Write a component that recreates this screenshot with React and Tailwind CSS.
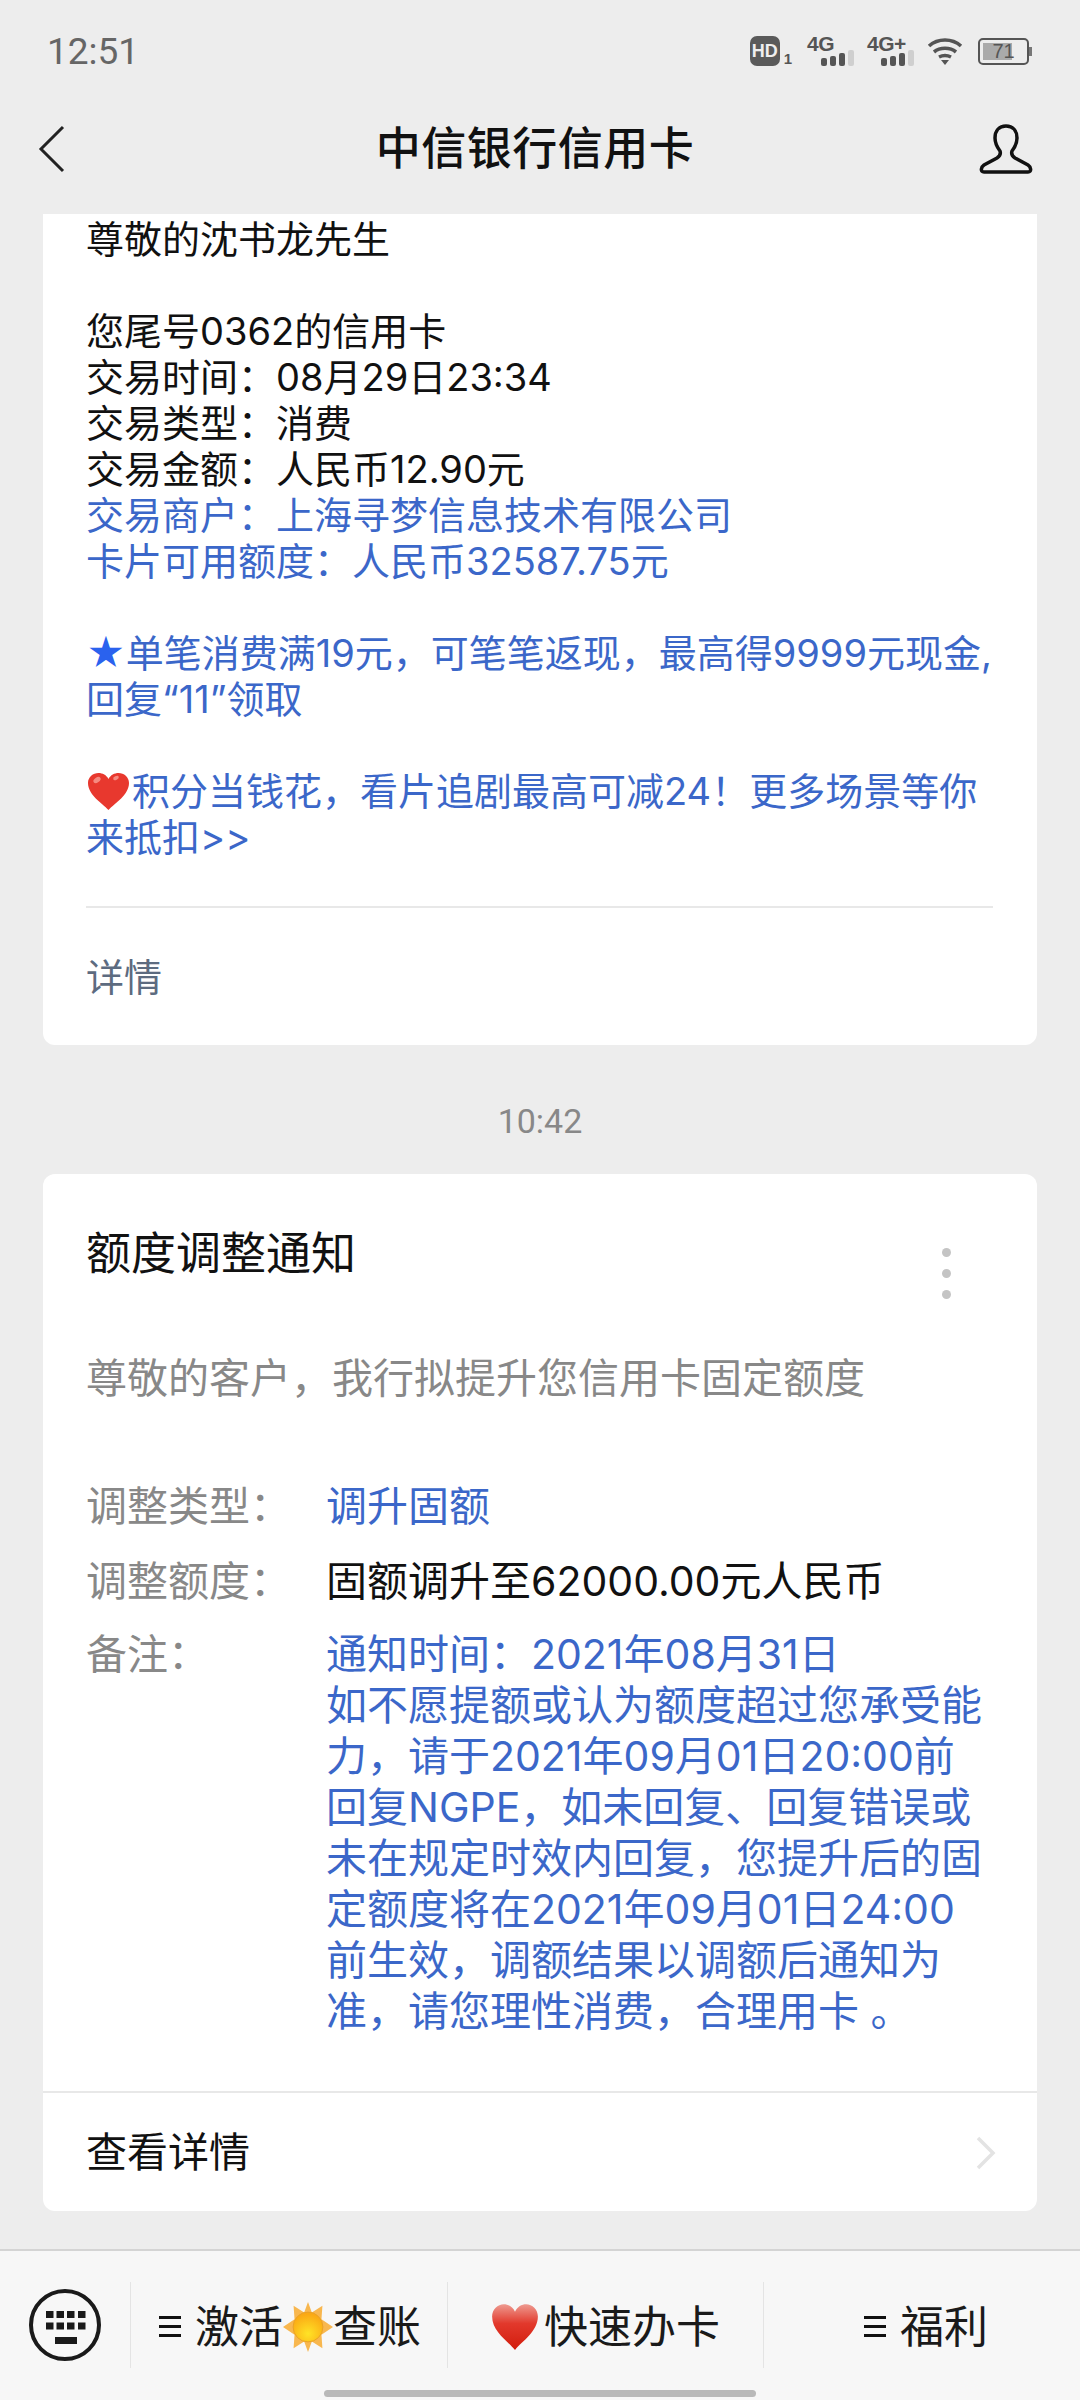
function Heart({ className, flat }) {
  return (
    <svg viewBox="0 0 43 38" preserveAspectRatio="none" className={className}>
      <defs>
        <linearGradient id="hg" x1="0" y1="0" x2="0" y2="1">
          <stop offset="0" stopColor="#ee9a90" />
          <stop offset="0.42" stopColor="#e2392c" />
          <stop offset="1" stopColor="#d21c0c" />
        </linearGradient>
      </defs>
      <path d="M21.5 38C15 31 1 23 1 11 1 5 6 1 11.5 1c4 0 8 2 10 6 2-4 6-6 10-6C37 1 42 5 42 11c0 12-14 20-20.5 27z" fill={flat ? "#e8382e" : "url(#hg)"} />
      {flat ? (
        <g fill="#f58a80">
          <ellipse cx="10" cy="8" rx="4" ry="2.5" transform="rotate(-35 10 8)" />
          <ellipse cx="29" cy="6" rx="3" ry="1.8" transform="rotate(-25 29 6)" />
        </g>
      ) : null}
    </svg>
  );
}
function Sun({ className }) {
  return (
    <svg viewBox="0 0 52 52" className={className}>
      <defs>
        <radialGradient id="sg" cx="0.5" cy="0.72" r="0.65">
          <stop offset="0" stopColor="#ffe326" />
          <stop offset="1" stopColor="#fba914" />
        </radialGradient>
      </defs>
      <path d="M26 0l4 11 11-7-1 14 12 8-12 8 1 14-11-7-4 11-4-11-11 7 1-14L0 26l12-8-1-14 11 7z" fill="#f8b74f" />
      <circle cx="26" cy="26" r="15.5" fill="url(#sg)" stroke="#e8a028" strokeWidth="1" />
    </svg>
  );
}
function Bars() {
  return (
    <div className="flex items-end gap-[3px]">
      <div className="w-[6px] h-[8px] rounded-[2px] bg-[#555]" />
      <div className="w-[6px] h-[10px] rounded-[2px] bg-[#555]" />
      <div className="w-[6px] h-[13px] rounded-[2px] bg-[#555]" />
      <div className="w-[6px] h-[16px] rounded-[2px] bg-[#cfcfcf]" />
    </div>
  );
}
function Net({ label }) {
  return (
    <div className="relative w-[47px] h-[30px]">
      <span className="absolute left-0 top-[-3px] text-[21px] leading-[21px] font-bold text-[#555] tracking-[-0.5px]" style={{ fontFamily: '"Liberation Sans", sans-serif' }}>{label}</span>
      <div className="absolute right-0 bottom-0"><Bars /></div>
    </div>
  );
}
function StatusBar() {
  return (
    <div className="h-[64px] pt-[30px] pl-[47px] pr-[48px] flex items-start justify-between" >
      <span className="text-[37px] leading-[44px] text-[#666]" style={{ fontFamily: "Roboto, sans-serif" }}>12:51</span>
      <div className="flex items-center h-[30px] mt-[6px]" style={{ fontFamily: '"Liberation Sans", sans-serif' }}>
        <div className="flex items-end gap-[4px] mr-[15px]">
          <div className="w-[30px] h-[30px] rounded-[7px] bg-[#5a5a5a] text-[#eee] text-[18px] font-bold leading-[30px] text-center">HD</div>
          <span className="text-[15px] leading-[14px] font-bold text-[#555]">1</span>
        </div>
        <Net label="4G" />
        <div className="ml-[13px] mr-[13px]"><Net label="4G+" /></div>
        <svg viewBox="0 0 36 28" className="w-[36px] h-[28px] mr-[15px]">
          <path d="M2 9c9-8 23-8 32 0M7 15c6-5 16-5 22 0M12 20c4-2 8-2 12 0" fill="none" stroke="#555" strokeWidth="3.6" />
          <path d="M14 23h8l-4 5z" fill="#555" />
        </svg>
        <div className="flex items-center">
          <div className="w-[51px] h-[27px] rounded-[5px] border-2 border-[#555] p-[3px] relative">
            <div className="w-[29px] h-full bg-[#aaa]" />
            <span className="absolute inset-0 text-center text-[20px] leading-[23px] text-[#555]">71</span>
          </div>
          <div className="w-[3px] h-[9px] bg-[#777]" />
        </div>
      </div>
    </div>
  );
}
function BottomItem({ className, children }) {
  return <div className={"flex items-center h-[86px] border-l border-[#e4e4e4] whitespace-nowrap text-[44px] leading-[50px] text-[#1a1a1a] " + className}>{children}</div>;
}
const Menu = () => (
  <span className="inline-flex flex-col gap-[6px] w-[22px] mr-[14px]">
    <span className="h-[3px] bg-[#111]" /><span className="h-[3px] bg-[#111]" /><span className="h-[3px] bg-[#111]" />
  </span>
);
export default function App() {
  return (
    <div className="w-[1080px] h-[2400px] overflow-hidden bg-[#ededed] flex flex-col" style={{ fontFamily: 'Inter, "Noto Sans CJK SC", sans-serif' }}>
      <StatusBar />
      <div className="h-[150px] flex items-center justify-between pl-[37px] pr-[47px] pt-[20px]">
        <svg viewBox="0 0 30 48" className="w-[30px] h-[48px]"><path d="M26 2L4 24l22 22" fill="none" stroke="#222" strokeWidth="3" /></svg>
        <span className="ml-[24px] text-[45px] leading-[54px] font-medium text-[#111] tracking-[0.5px]">中信银行信用卡</span>
        <svg viewBox="0 0 54 50" className="w-[54px] h-[50px]"><path d="M27 2c-7 0-11 5-11 12 0 5 2 9 5 13 1 3 0 5-3 7L5 41c-3 2-4 7 0 7h44c4 0 3-5 0-7L36 34c-3-2-4-4-3-7 3-4 5-8 5-13 0-7-4-12-11-12z" fill="none" stroke="#111" strokeWidth="3.5" /></svg>
      </div>
      <div className="flex-1 px-[43px] flex flex-col">
        <div className="bg-white rounded-b-[12px] h-[831px] pl-[43px] pr-[44px] pt-[2px] text-[38px] leading-[46px] text-[#111] shrink-0">
          <div>尊敬的沈书龙先生</div>
          <div className="mt-[46px]">您尾号0362的信用卡</div>
          <div>交易时间：08月29日23:34</div>
          <div>交易类型：消费</div>
          <div>交易金额：人民币12.90元</div>
          <div className="text-[#3b67c9]">
            <div>交易商户：上海寻梦信息技术有限公司</div>
            <div>卡片可用额度：人民币32587.75元</div>
            <div className="mt-[46px] whitespace-nowrap"><span className="text-[#2a62ee]">★</span>单笔消费满19元，可笔笔返现，最高得9999元现金,</div>
            <div>回复“11”领取</div>
            <div className="mt-[46px] flex items-center whitespace-nowrap"><Heart flat className="w-[43px] h-[38px] ml-[1px] mr-[2px] shrink-0" />积分当钱花，看片追剧最高可减24！更多场景等你</div>
            <div>来抵扣&gt;&gt;</div>
          </div>
          <div className="mt-[46px] border-t-2 border-[#e8e8e8] pt-[46px] text-[#5d6b80]">详情</div>
        </div>
        <div className="h-[129px] pt-[24px] flex items-center justify-center text-[34px] text-[#888]" style={{ fontFamily: "Roboto, sans-serif" }}>10:42</div>
        <div className="bg-white rounded-[12px] h-[1037px] shrink-0 flex flex-col">
          <div className="pl-[43px] pr-[44px] flex-1">
            <div className="flex justify-between items-start pt-[53px]">
              <span className="text-[45px] leading-[54px] text-[#111]">额度调整通知</span>
              <div className="flex flex-col gap-[12px] mt-[21px] mr-[42px]">
                <div className="w-[9px] h-[9px] rounded-full bg-[#c4c4c4]" />
                <div className="w-[9px] h-[9px] rounded-full bg-[#c4c4c4]" />
                <div className="w-[9px] h-[9px] rounded-full bg-[#c4c4c4]" />
              </div>
            </div>
            <div className="mt-[54px] text-[41px] leading-[51px] text-[#888]">尊敬的客户，我行拟提升您信用卡固定额度</div>
            <div className="mt-[77px] text-[41px] leading-[51px] grid grid-cols-[240px_1fr] gap-y-[24px]">
              <div className="text-[#888]">调整类型：</div>
              <div className="text-[#3b67c9]">调升固额</div>
              <div className="text-[#888]">调整额度：</div>
              <div className="text-[#111]">固额调升至62000.00元人民币</div>
            </div>
            <div className="mt-[22px] text-[41px] leading-[51px] grid grid-cols-[240px_1fr]">
              <div className="text-[#888]">备注：</div>
              <div className="text-[#3b67c9] whitespace-nowrap">
                <div>通知时间：2021年08月31日</div>
                <div>如不愿提额或认为额度超过您承受能</div>
                <div>力，请于2021年09月01日20:00前</div>
                <div>回复NGPE，如未回复、回复错误或</div>
                <div>未在规定时效内回复，您提升后的固</div>
                <div>定额度将在2021年09月01日24:00</div>
                <div>前生效，调额结果以调额后通知为</div>
                <div>准，请您理性消费，合理用卡 。</div>
              </div>
            </div>
          </div>
          <div className="h-[120px] border-t-2 border-[#e8e8e8] pl-[43px] pr-[41px] pt-[2px] flex items-center justify-between">
            <span className="text-[41px] text-[#111]">查看详情</span>
            <svg viewBox="0 0 20 34" className="w-[20px] h-[34px]"><path d="M2 2l15 15L2 32" fill="none" stroke="#e3e3e3" strokeWidth="3.5" /></svg>
          </div>
        </div>
      </div>
      <div className="h-[151px] border-t-2 border-[#d4d4d4] bg-[#f7f7f7] relative flex items-start pt-[31px]">
        <div className="w-[130px] h-[86px] flex items-center justify-center shrink-0">
          <svg viewBox="0 0 72 72" className="w-[72px] h-[72px]">
            <circle cx="36" cy="36" r="34" fill="none" stroke="#1a1a1a" strokeWidth="4" />
            <g fill="#1a1a1a">
              <rect x="17" y="22" width="7.5" height="7" /><rect x="27.5" y="22" width="7.5" height="7" /><rect x="38" y="22" width="7.5" height="7" /><rect x="49" y="22" width="7.5" height="7" />
              <rect x="17" y="33.5" width="7.5" height="7" /><rect x="27.5" y="33.5" width="7.5" height="7" /><rect x="38" y="33.5" width="7.5" height="7" /><rect x="49" y="33.5" width="7.5" height="7" />
              <rect x="26" y="48" width="22" height="7" />
            </g>
          </svg>
        </div>
        <BottomItem className="w-[317px] pl-[28px] pt-[3px]"><Menu />激活<Sun className="w-[50px] h-[50px]" />查账</BottomItem>
        <BottomItem className="w-[316px] justify-center pt-[3px]"><Heart className="w-[48px] h-[47px] mr-[5px]" />快速办卡</BottomItem>
        <BottomItem className="flex-1 justify-center pl-[8px] pt-[3px]"><Menu />福利</BottomItem>
        <div className="absolute left-[324px] top-[139px] w-[432px] h-[7px] rounded-full bg-[#b9b9b9]" />
      </div>
    </div>
  );
}
